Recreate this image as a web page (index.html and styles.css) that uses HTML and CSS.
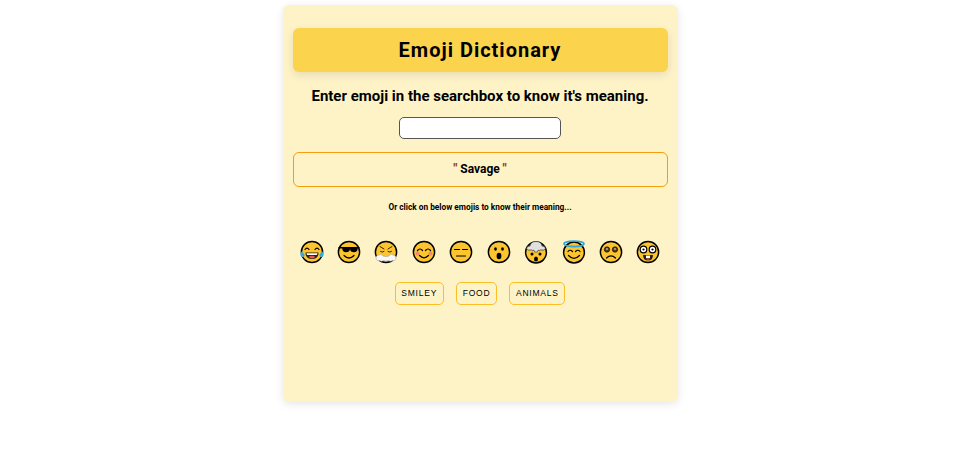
FILE: index.html
```html
<!DOCTYPE html>
<html lang="en">
<head>
<meta charset="utf-8">
<title>Emoji Dictionary</title>
<link rel="stylesheet" href="styles.css">
</head>
<body>
<main class="card">
  <h1 class="title">Emoji Dictionary</h1>
  <h2 class="prompt">Enter emoji in the searchbox to know it's meaning.</h2>
  <input class="search" type="text" aria-label="Emoji">
  <div class="result"><span class="quote">"</span> Savage <span class="quote">"</span></div>
  <p class="hint">Or click on below emojis to know their meaning...</p>
  <div class="emojis">
    <svg class="emoji" viewBox="0 0 24 24"><circle class="face" cx="12" cy="12" r="10.600"/><path class="ln" d="M5 9.500q2-2.600 4 0M15 9.500q2-2.600 4 0"/><path class="mouth" d="M5.500 12.500h13q0 6.500-6.500 6.500t-6.500-6.500z"/><path class="tongue" d="M8.500 17q3.500-2.500 7 0-3.500 2.800-7 0z"/><path class="teeth" d="M6.500 13.300h11l-.6 1.700h-9.800z"/><path class="tear" d="M1 11.500q3 1 3.800 3.800-1 2.500-3.300 1.500-2-1.500-.5-5.300zM23 11.500q-3 1-3.800 3.800 1 2.500 3.300 1.500 2-1.500.5-5.300z"/></svg>
    <svg class="emoji" viewBox="0 0 24 24"><circle class="face" cx="12" cy="12" r="10.600"/><path class="fill" d="M1.500 7h21v1.500h-1.800q-.2 3.800-3.700 3.800-3.600 0-4-3.300q-.4 3.300-4 3.300-3.500 0-3.700-3.800h-3.800z"/><path class="ln" d="M7 15.500q5 5 10 0"/></svg>
    <svg class="emoji" viewBox="0 0 24 24"><circle class="face" cx="12" cy="12" r="10.600"/><path class="ln-thin" d="M6 6.500l4 2.500M18 6.500l-4 2.500M6.500 11.500q1.800 1.300 3.500 0M14 11.500q1.800 1.300 3.500 0"/><path class="steam" d="M2 19q-.5-4 3-4 1.500-1.500 3 0 1 1.500 4 1.500t4-1.500q1.500-1.500 3 0 3.500 0 3 4-1 2.500-3.500 1.500-2 1.500-4 0-2.500 1-5 0-2 1.500-4 0-2.500 1-3.500-1.500z"/></svg>
    <svg class="emoji" viewBox="0 0 24 24"><circle class="face" cx="12" cy="12" r="10.600"/><circle class="blush" cx="5.500" cy="13.500" r="2"/><circle class="blush" cx="18.500" cy="13.500" r="2"/><path class="ln" d="M5.500 10.500q2.500-3 5 0M13.500 10.500q2.500-3 5 0M7.500 15.500q4.500 4.500 9 0"/></svg>
    <svg class="emoji" viewBox="0 0 24 24"><circle class="face" cx="12" cy="12" r="10.600"/><path class="ln" d="M5.500 9.500h5M13.500 9.500h5M7.500 16h9"/></svg>
    <svg class="emoji" viewBox="0 0 24 24"><circle class="face" cx="12" cy="12" r="10.600"/><ellipse class="fill" cx="8.500" cy="9" rx="1.400" ry="1.800"/><ellipse class="fill" cx="15.500" cy="9" rx="1.400" ry="1.800"/><ellipse class="fill" cx="12" cy="16" rx="2.400" ry="3.200"/></svg>
    <svg class="emoji" viewBox="0 0 24 24"><circle class="face" cx="12" cy="12.500" r="10.400"/><path class="smoke" d="M2.500 8.500q.5-3 3.500-2.500.5-4.500 6-4.500t6 4.500q3-.5 3.500 2.500-1.500 2.500-5 1.500-1 .8-2.500.3 0 2-2 2t-2-2q-1.500.5-2.500-.3-3.500 1-5-1.500z"/><circle class="fill" cx="8" cy="14" r="1.500"/><circle class="fill" cx="16" cy="14" r="1.500"/><ellipse class="fill" cx="12" cy="19" rx="2" ry="2.500"/></svg>
    <svg class="emoji" viewBox="0 0 24 24"><circle class="face" cx="12" cy="12.500" r="10.400"/><ellipse class="halo" cx="12" cy="3.800" rx="10" ry="2.800"/><path class="ln" d="M6 11.500q2-2.500 4.500 0M13.500 11.500q2.500-2.500 4.500 0M6.500 15.500q5.500 5.500 11 0"/></svg>
    <svg class="emoji" viewBox="0 0 24 24"><circle class="face" cx="12" cy="12" r="10.600"/><circle class="eye" cx="8" cy="9.500" r="2.700"/><circle class="eye" cx="16" cy="9.500" r="2.700"/><circle class="shine" cx="8" cy="9" r=".8"/><circle class="shine" cx="16" cy="9" r=".8"/><path class="ln" d="M7.500 18q4.500-4.500 9 0"/></svg>
    <svg class="emoji" viewBox="0 0 24 24"><circle class="face" cx="12" cy="12" r="10.600"/><circle class="lens" cx="7.500" cy="9.500" r="3.300"/><circle class="lens" cx="16.500" cy="9.500" r="3.300"/><circle class="fill" cx="7.500" cy="9.500" r="1.100"/><circle class="fill" cx="16.500" cy="9.500" r="1.100"/><path class="mouth" d="M7 15h10q0 5.500-5 5.500t-5-5.500z"/><path class="teeth" d="M10 15.500h4v2.500h-4z"/><path class="tongue" d="M9.500 19q2.500-1.500 5 0-2.500 1.500-5 0z"/></svg>
  </div>
  <div class="categories">
    <button class="chip" type="button">Smiley</button>
    <button class="chip" type="button">Food</button>
    <button class="chip" type="button">Animals</button>
  </div>
</main>
</body>
</html>
```

FILE: styles.css
```css
* {
  box-sizing: border-box;
}

html,
body {
  height: 100%;
}

body {
  margin: 0;
  background: #fff;
  font-family: Roboto, "Liberation Sans", sans-serif;
  color: #000;
  overflow: hidden;
}

.card {
  width: 395px;
  height: 397px;
  margin: 5px auto 0;
  padding: 23px 10px 0;
  background: #fef3c7;
  border-radius: 6px;
  box-shadow: 0 2px 8px rgba(0, 0, 0, 0.1);
  display: flex;
  flex-direction: column;
  align-items: center;
}

.title {
  align-self: stretch;
  height: 44px;
  margin: 0;
  background: #fcd34d;
  border-radius: 6px;
  box-shadow: 0 3px 8px rgba(0, 0, 0, 0.1);
  font-size: 20px;
  font-weight: 700;
  letter-spacing: 1px;
  line-height: 45px;
  text-align: center;
}

.prompt {
  margin: 15px 0 0;
  font-size: 15px;
  font-weight: 700;
  line-height: 19px;
}

.search {
  width: 162px;
  height: 22px;
  margin-top: 11px;
  background: #fff;
  border: 1px solid #555;
  border-radius: 5px;
}

.result {
  align-self: stretch;
  height: 35px;
  margin-top: 13px;
  border: 1px solid #f59e0b;
  border-radius: 6px;
  font-size: 12px;
  font-weight: 700;
  line-height: 33px;
  text-align: center;
}

.quote {
  color: #92400e;
  font-weight: 900;
}

.hint {
  margin: 15px 0 0;
  font-size: 8.300px;
  font-weight: 700;
  line-height: 10px;
}

.emojis {
  align-self: stretch;
  display: flex;
  justify-content: space-between;
  margin-top: 28px;
  padding: 0 7px;
}

.emoji {
  width: 24px;
  height: 24px;
  display: block;
}

.face {
  fill: #fcc42e;
  stroke: #000;
  stroke-width: 1.500;
}

.ln {
  fill: none;
  stroke: #000;
  stroke-width: 1.200;
  stroke-linecap: round;
}

.ln-thin {
  fill: none;
  stroke: #000;
  stroke-width: 0.800;
  stroke-linecap: round;
}

.fill {
  fill: #000;
}

.eye {
  fill: #5a3a10;
  stroke: #000;
  stroke-width: 0.600;
}

.mouth {
  fill: #222;
}

.tongue {
  fill: #ea5a47;
}

.teeth,
.shine {
  fill: #fff;
}

.tear {
  fill: #36a9e1;
}

.blush {
  fill: #f08a6c;
}

.steam {
  fill: #f8f8f8;
  stroke: #999;
  stroke-width: 0.500;
}

.smoke {
  fill: #e0e0e0;
  stroke: #333;
  stroke-width: 0.700;
}

.halo {
  fill: none;
  stroke: #29a8e0;
  stroke-width: 1.700;
}

.lens {
  fill: #fff;
  stroke: #000;
  stroke-width: 1.200;
}

.categories {
  display: flex;
  gap: 12.500px;
  margin-top: 18px;
}

.chip {
  height: 23px;
  padding: 0 5.500px 1px;
  background: transparent;
  border: 1px solid #fbbf24;
  border-radius: 5px;
  font-family: "Liberation Sans", Arial, sans-serif;
  font-size: 8.500px;
  letter-spacing: 0.800px;
  text-transform: uppercase;
  color: #000;
}
```
